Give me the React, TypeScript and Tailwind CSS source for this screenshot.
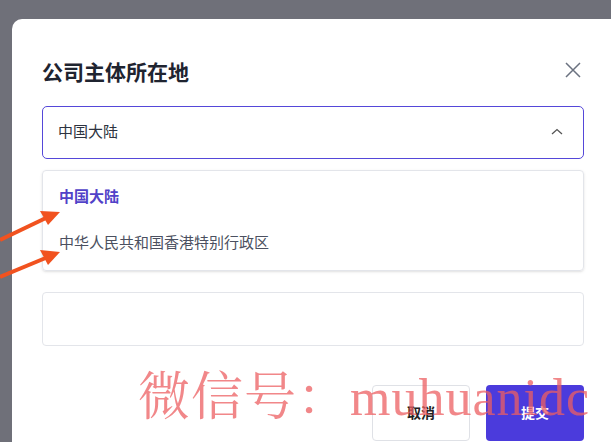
import React from 'react';

const App = () => {
  return (
    <div className="relative w-[611px] h-[442px] overflow-hidden bg-[#6f7079]" style={{ fontFamily: 'Inter, "Noto Sans CJK SC", sans-serif' }}>
      <div className="absolute left-[12px] top-[19px] w-[640px] h-[460px] bg-white rounded-[10px] px-[30px] pt-[38px]">
        <div className="flex items-center justify-between w-[542px]">
          <h2 className="text-[21px] font-bold text-[#1f2430]">公司主体所在地</h2>
          <svg width="18" height="18" viewBox="0 0 18 18" className="mr-[2px] -mt-[6px]">
            <path d="M2 2L16 16M16 2L2 16" stroke="#6b7280" strokeWidth="1.5" />
          </svg>
        </div>
        <div className="mt-[17px] w-[542px] h-[53px] border border-[#5548d9] rounded-[5px] flex items-center justify-between px-[15px]">
          <span className="text-[15px] text-[#2d3340]">中国大陆</span>
          <svg width="14" height="10" viewBox="0 0 14 10" className="mr-[4px]">
            <path d="M2 7L7 2.5L12 7" stroke="#555" strokeWidth="1.3" fill="none" />
          </svg>
        </div>
        <div className="mt-[11px] w-[542px] h-[101px] border border-[#e3e5ea] rounded-[4px] shadow-sm px-[16px] flex flex-col justify-center gap-[24px]">
          <span className="text-[15px] font-bold text-[#5142c8]">中国大陆</span>
          <span className="text-[15px] text-[#4b5060]">中华人民共和国香港特别行政区</span>
        </div>
        <div className="mt-[21px] w-[542px] h-[54px] border border-[#e3e5ea] rounded-[4px]" />
        <div className="mt-[39px] w-[542px] flex justify-end gap-[16px]">
          <button className="w-[98px] h-[56px] border border-[#dfe1e6] rounded-[4px] bg-white text-[14px] font-semibold text-[#222]">取消</button>
          <button className="w-[98px] h-[56px] rounded-[4px] bg-[#4b3bdc] text-[14px] font-bold text-white">提交</button>
        </div>
      </div>
      <svg className="absolute left-0 top-[205px]" width="70" height="80" viewBox="0 0 70 80">
        <path d="M0 35L48 12" stroke="#f1521f" strokeWidth="4" />
        <path d="M60 7L40 6L48 20Z" fill="#f1521f" />
        <path d="M0 72L48 52" stroke="#f1521f" strokeWidth="4" />
        <path d="M60 47L40 45L48 60Z" fill="#f1521f" />
      </svg>
      <div className="absolute left-[138px] top-[372px] text-[52px] leading-none text-[#ec5f62]/75 whitespace-nowrap tracking-[1px]" style={{ fontFamily: '"Liberation Serif", "Noto Serif CJK SC", "Noto Sans CJK SC", serif' }}>
        微信号：muhuanidc
      </div>
    </div>
  );
};

export default App;
